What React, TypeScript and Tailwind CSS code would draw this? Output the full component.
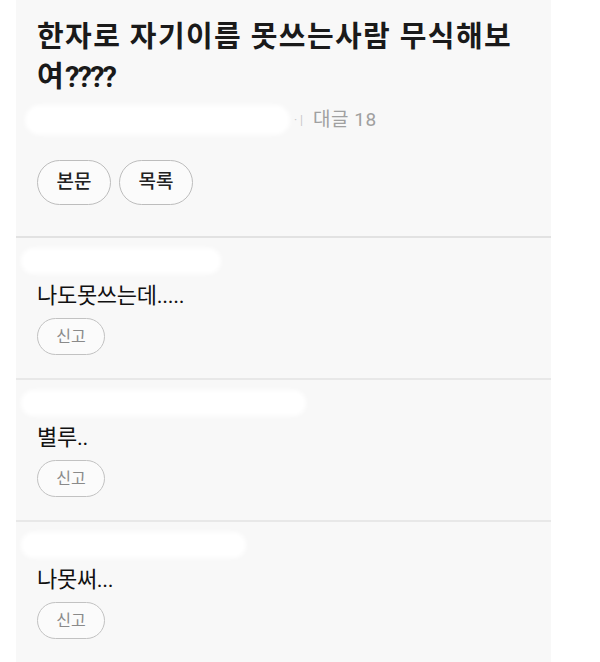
const comments = [
  { text: "나도못쓰는데.....", blob: "w-[200px]" },
  { text: "별루..", blob: "w-[285px]" },
  { text: "나못써...", blob: "w-[225px]" },
];

const font = "font-['Roboto','Noto_Sans_CJK_KR',sans-serif]";

export default function App() {
  return (
    <div className={`min-h-[662px] w-[600px] bg-white ${font}`}>
      <div className="ml-4 w-[535px] bg-[#f8f8f8]">
        {/* 글 제목 */}
        <div className="border-b-2 border-[#e2e2e2] pl-[21px] pt-[17px] pb-[31px]">
          <h1 className="text-[29px] font-bold leading-[40px] tracking-[1.4px] text-[#1a1a1a]">
            한자로 자기이름 못쓰는사람 무식해보
            <br />
            여<span className="tracking-[-2px]">????</span>
          </h1>

          <div className="mt-[11px] flex h-6 items-center">
            <div className="-ml-3 h-[30px] w-[265px] rounded-full bg-white blur-[2px]" />
            <span className="ml-1 text-[12px] text-[#c8c8c8]">· |</span>
            <span className="ml-[10px] text-[19px] tracking-[0.5px] text-[#a0a0a0]">대글 18</span>
          </div>

          <div className="mt-[28px] flex gap-2">
            <button className="h-[45px] w-[74px] rounded-full border border-[#bdbdbd] bg-[#fbfbfb] text-[19px] font-medium text-[#222]">
              본문
            </button>
            <button className="h-[45px] w-[74px] rounded-full border border-[#bdbdbd] bg-[#fbfbfb] text-[19px] font-medium text-[#222]">
              목록
            </button>
          </div>
        </div>

        {/* 댓글 */}
        {comments.map((c, i) => (
          <div
            key={i}
            className={`pl-[21px] pt-2 pb-[23px] ${i < comments.length - 1 ? "border-b-2 border-[#e8e8e8]" : ""}`}
          >
            <div className="flex h-[30px] items-center">
              <div className={`-ml-4 h-[26px] ${c.blob} rounded-full bg-white blur-[2px]`} />
            </div>
            <p className="mt-1 text-[22px] leading-[32px] tracking-[-0.3px] text-[#111]">{c.text}</p>
            <button className="mt-[6px] h-[37px] w-[68px] rounded-full border border-[#c2c2c2] bg-[#fbfbfb] text-[16px] text-[#8a8a8a]">
              신고
            </button>
          </div>
        ))}
      </div>
    </div>
  );
}
